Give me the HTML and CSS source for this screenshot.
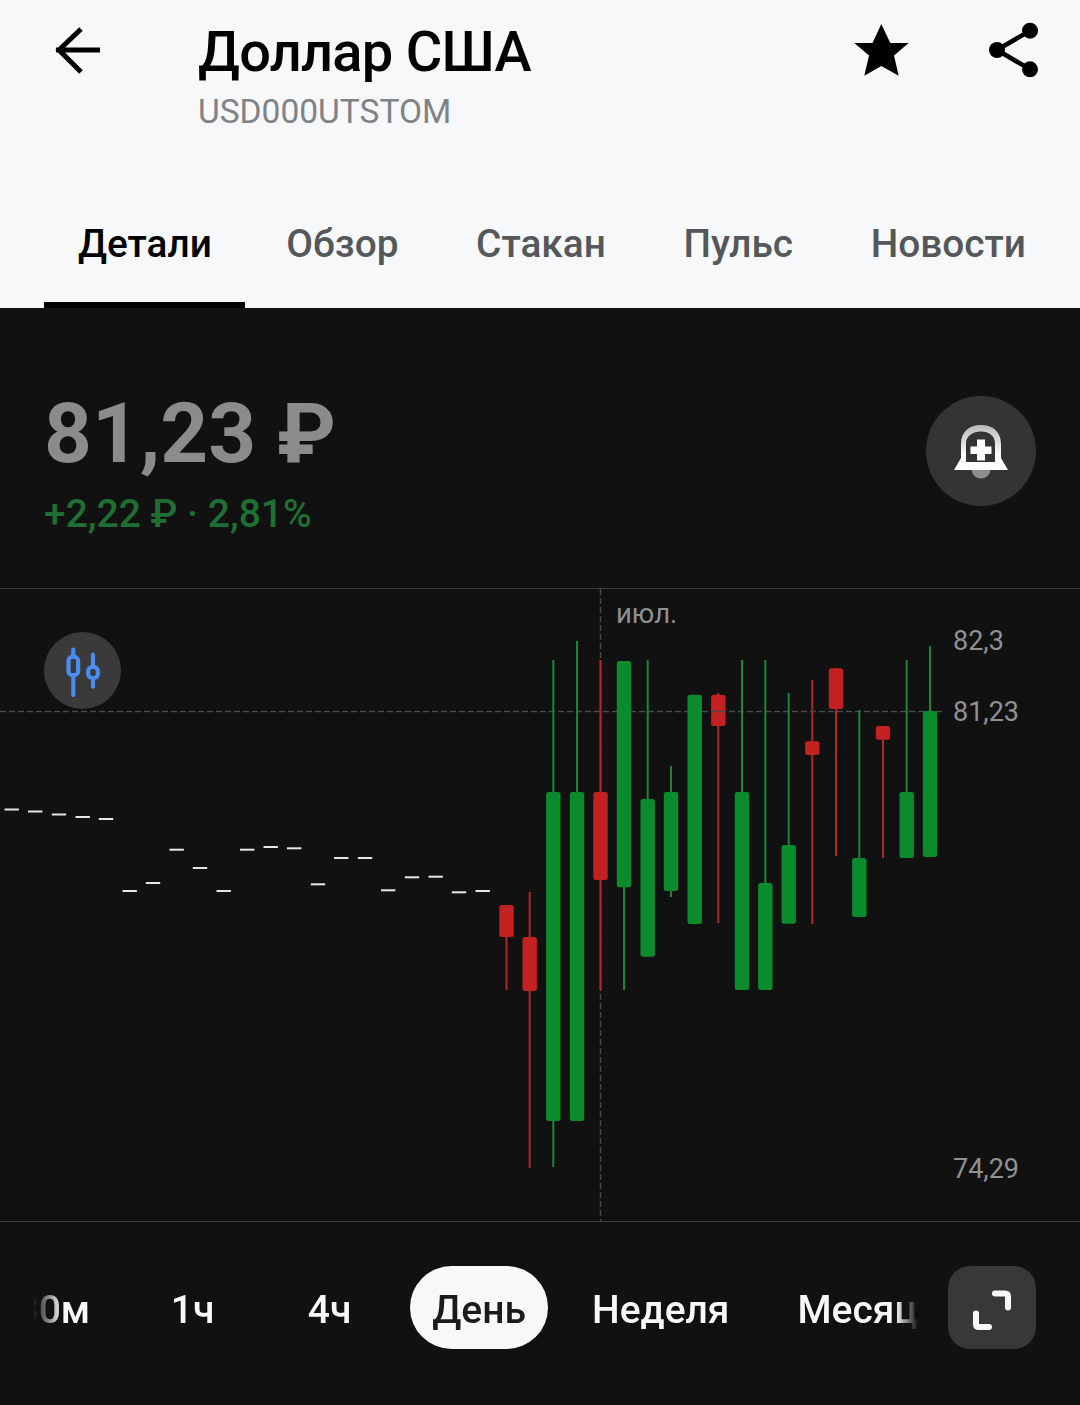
FILE: index.html
```html
<!DOCTYPE html>
<html lang="ru">
<head>
<meta charset="utf-8">
<title>Доллар США</title>
<link rel="stylesheet" href="styles.css">
</head>
<body>
<div class="page">
  <header class="header">
    <div class="topbar">
      <svg class="back" viewBox="0 0 56 56" aria-hidden="true"><path d="M2 28H46M27 7L5 28L27 50"/></svg>
      <div class="heading">
        <h1 class="title">Доллар США</h1>
        <div class="ticker">USD000UTSTOM</div>
      </div>
      <div class="actions">
        <svg class="star" viewBox="0 0 56 56" aria-hidden="true"><path d="M28.3 2L37.3 21H55.7L41 33.5L45.7 53.7L28.3 44L11.3 53.7L16 33.5L1.3 21H19.5Z"/></svg>
        <svg class="share" viewBox="0 0 56 56" aria-hidden="true"><path class="share-line" d="M41 8.700L8 28L41 47.300"/><circle cx="41" cy="8.700" r="8"/><circle cx="8" cy="28" r="8"/><circle cx="41" cy="47.300" r="8"/></svg>
      </div>
    </div>
    <nav class="tabs">
      <a class="tab tab-active">Детали</a>
      <a class="tab">Обзор</a>
      <a class="tab">Стакан</a>
      <a class="tab">Пульс</a>
      <a class="tab">Новости</a>
    </nav>
  </header>

  <section class="quote">
    <div class="quote-text">
      <div class="price">81,23 ₽</div>
      <div class="change">+2,22 ₽ · 2,81%</div>
    </div>
    <button class="alert-btn" aria-label="Добавить уведомление">
      <svg class="bell" viewBox="0 0 110 110" aria-hidden="true">
        <defs>
          <linearGradient id="bellFill" x1="0" y1="0" x2="0" y2="1">
            <stop offset="0" stop-color="#b9b9b9"/>
            <stop offset="0.7" stop-color="#ffffff"/>
          </linearGradient>
        </defs>
        <path class="clapper" d="M45.500 73a9.500 9.500 0 0 0 19 0z"/>
        <path fill="url(#bellFill)" fill-rule="evenodd" d="M28 74L35 62V48C35 36 43 29 55 29C67 29 75 36 75 48V62L82 74ZM40 66H69V47C69 40 63 35.500 55 35.500C47 35.500 40 40 40 47Z"/>
        <path class="plus" d="M51 43.500H59V50.500H65.500V58H59V64.500H51V58H44.500V50.500H51Z"/>
      </svg>
    </button>
  </section>

  <section class="chart">
    <svg class="plot" viewBox="0 589 1080 632" aria-hidden="true">
      <path class="grid" d="M600.500 589V1221"/>
      <g class="doji">
        <rect x="4.500" y="808.500" width="14.400" height="2"/><rect x="28" y="810.500" width="14.400" height="2"/><rect x="51.800" y="813.500" width="14.400" height="2"/><rect x="75.500" y="816" width="14.400" height="2"/><rect x="98.800" y="818" width="14.400" height="2"/>
        <rect x="122.500" y="890" width="14.400" height="2"/><rect x="145.800" y="882" width="14.400" height="2"/><rect x="169.500" y="848.700" width="14.400" height="2"/><rect x="192.800" y="867" width="14.400" height="2"/><rect x="216.500" y="890" width="14.400" height="2"/>
        <rect x="240" y="848.700" width="14.400" height="2"/><rect x="263.500" y="846" width="14.400" height="2"/><rect x="287" y="847.300" width="14.400" height="2"/><rect x="310.800" y="883.300" width="14.400" height="2"/><rect x="334" y="857" width="14.400" height="2"/>
        <rect x="357.800" y="857" width="14.400" height="2"/><rect x="381" y="889.300" width="14.400" height="2"/><rect x="404.800" y="876.300" width="14.400" height="2"/><rect x="428.500" y="875.700" width="14.400" height="2"/><rect x="451.800" y="891.300" width="14.400" height="2"/><rect x="475.500" y="890" width="14.400" height="2"/>
      </g>
      <g class="down">
        <path class="wick" d="M506.500 905V990M529.700 892V1168M600.500 660V990M718.300 693V923M812.300 680V924M836 668V856M883 726V858"/>
        <rect class="body" x="499.300" y="905" width="14.400" height="32" rx="2.500"/>
        <rect class="body" x="522.500" y="937" width="14.400" height="54" rx="2.500"/>
        <rect class="body" x="593.300" y="792" width="14.400" height="88" rx="2.500"/>
        <rect class="body" x="711.100" y="694.700" width="14.400" height="31.300" rx="2.500"/>
        <rect class="body" x="805.100" y="741.300" width="14.400" height="13.700" rx="2.500"/>
        <rect class="body" x="828.800" y="668.300" width="14.400" height="40.700" rx="2.500"/>
        <rect class="body" x="875.800" y="726" width="14.400" height="13.700" rx="2.500"/>
      </g>
      <path class="grid" d="M0 711.500H942"/>
      <g class="up">
        <path class="wick" d="M553.300 660V1167M577 641V792M624 661V990M647.700 660V800M671 766V897M742 660V792M765.300 660V884M788.700 693V846M859.300 710V858M906.700 660V792M930 646V712"/>
        <rect class="body" x="546.100" y="792" width="14.400" height="329" rx="2.500"/>
        <rect class="body" x="569.800" y="792" width="14.400" height="329" rx="2.500"/>
        <rect class="body" x="616.800" y="661" width="14.400" height="226.300" rx="2.500"/>
        <rect class="body" x="640.500" y="799" width="14.400" height="157.700" rx="2.500"/>
        <rect class="body" x="663.800" y="792" width="14.400" height="99" rx="2.500"/>
        <rect class="body" x="687.500" y="694.700" width="14.400" height="229.300" rx="2.500"/>
        <rect class="body" x="734.800" y="792" width="14.400" height="198" rx="2.500"/>
        <rect class="body" x="758.100" y="883" width="14.400" height="107" rx="2.500"/>
        <rect class="body" x="781.500" y="845" width="14.400" height="78.700" rx="2.500"/>
        <rect class="body" x="852.100" y="858" width="14.400" height="59" rx="2.500"/>
        <rect class="body" x="899.500" y="792" width="14.400" height="66" rx="2.500"/>
        <rect class="body" x="922.800" y="711" width="14.400" height="146" rx="2.500"/>
      </g>
    </svg>
    <span class="axis-label month">июл.</span>
    <span class="axis-label level-high">82,3</span>
    <span class="axis-label level-last">81,23</span>
    <span class="axis-label level-low">74,29</span>
    <button class="type-btn" aria-label="Тип графика">
      <svg class="type-icon" viewBox="0 0 77 77" aria-hidden="true">
        <path d="M29.300 17.500V24.700M29.300 43V63M49 22.700V35M49 46V54.700"/>
        <rect x="24.500" y="24.700" width="9.600" height="18.500" rx="4"/>
        <rect x="44.200" y="35" width="9.600" height="11" rx="4"/>
      </svg>
    </button>
  </section>

  <footer class="periods">
    <div class="period-list">
      <span class="period period-first">30м</span>
      <span class="period">1ч</span>
      <span class="period">4ч</span>
      <span class="period period-active">День</span>
      <span class="period">Неделя</span>
      <span class="period">Месяц</span>
    </div>
    <button class="expand-btn" aria-label="Развернуть">
      <svg class="expand" viewBox="0 0 88 83" aria-hidden="true"><path d="M47 27.600H57Q60 27.600 60 30.600V41.600M28 47.600V58Q28 61 31 61H41"/></svg>
    </button>
  </footer>
</div>
</body>
</html>
```
FILE: styles.css
```css
* { box-sizing: border-box; }
html, body { margin: 0; padding: 0; }
body {
  width: 1080px;
  height: 1405px;
  overflow: hidden;
  background: #111112;
  font-family: Roboto, "Noto Sans", sans-serif;
}
button { border: 0; padding: 0; margin: 0; }
svg { display: block; }

.page { width: 1080px; height: 1405px; display: flex; flex-direction: column; }

/* header */
.header { height: 308px; background: #f7f8fa; display: flex; flex-direction: column; flex: none; }
.topbar { display: flex; align-items: flex-start; padding: 22px 35px 0 54px; height: 206px; }
.back { width: 56px; height: 56px; flex: none; }
.back path { fill: none; stroke: #000; stroke-width: 5; }
.heading { margin-left: 88px; }
.title { margin: 0; font-size: 56px; line-height: 60px; font-weight: 500; color: #000; letter-spacing: -0.75px; }
.ticker { margin-top: 8px; font-size: 33.5px; line-height: 44px; color: #808285; }
.actions { margin-left: auto; display: flex; gap: 80px; }
.star, .share { width: 56px; height: 56px; flex: none; }
.share-line { fill: none; stroke: #000; stroke-width: 4.6; }

.tabs { display: flex; gap: 10px; padding-left: 44px; height: 102px; }
.tab { padding: 0 33.8px; height: 102px; line-height: 76px; font-size: 38.8px; font-weight: 500; color: #55585b; white-space: nowrap; }
.tab-active { color: #000; border-bottom: 6px solid #000; padding: 0 33px 0 34px; margin-right: -2.4px; }

/* quote */
.quote { height: 281px; border-bottom: 1px solid #3a3b3c; display: flex; justify-content: space-between; padding: 88px 44px 0; flex: none; }
.price { font-size: 83.5px; line-height: 76px; font-weight: 700; color: #8b8b8b; }
.change { margin-top: 20px; font-size: 39px; line-height: 44px; font-weight: 500; color: #1f6f33; }
.alert-btn { width: 110px; height: 110px; border-radius: 50%; background: #343434; flex: none; }
.bell { width: 110px; height: 110px; }
.clapper { fill: #8e8e8e; }
.plus { fill: #fff; }

/* chart */
.chart { position: relative; height: 633px; border-bottom: 1px solid #3a3b3c; flex: none; }
.plot { width: 1080px; height: 632px; }
.grid { fill: none; stroke: #48494a; stroke-width: 1.5; stroke-dasharray: 6 3; }
.doji rect { fill: #e6e6e6; }
.wick { fill: none; stroke-width: 2; }
.up .wick { stroke: #1f8436; }
.down .wick { stroke: #ad2a2a; }
.up .body { fill: #0a8b2c; }
.down .body { fill: #c22021; }
.axis-label { position: absolute; font-size: 27px; line-height: 32px; color: #8f9194; white-space: nowrap; }
.month { left: 616px; top: 9px; font-size: 27.5px; }
.level-high { left: 953px; top: 36px; }
.level-last { left: 953px; top: 107px; }
.level-low { left: 953px; top: 564px; }
.type-btn { position: absolute; left: 44px; top: 43px; width: 77px; height: 77px; border-radius: 50%; background: #3a3a3b; }
.type-icon { width: 77px; height: 77px; }
.type-icon path, .type-icon rect { fill: none; stroke: #4a8cf0; stroke-width: 4.2; stroke-linecap: round; }

/* periods */
.periods { flex: 1; display: flex; align-items: flex-start; padding-top: 44px; }
.period-list {
  width: 918px;
  flex: none;
  display: flex;
  gap: 23px;
  overflow: hidden;
  -webkit-mask-image: linear-gradient(to right, transparent 33px, #000 62px, #000 896px, transparent 918px);
  mask-image: linear-gradient(to right, transparent 33px, #000 62px, #000 896px, transparent 918px);
}
.period { flex: none; min-width: 114px; height: 83px; padding: 0 22.5px; border-radius: 42px; line-height: 88px; text-align: center; font-size: 39px; font-weight: 500; color: #f7f8fa; white-space: nowrap; }
.period-first { margin-left: -6px; }
.period-active { background: #f7f8fa; color: #1a1b1c; margin-right: -2px; }
.expand-btn { margin-left: 30px; width: 88px; height: 83px; border-radius: 22px; background: #38383a; flex: none; }
.expand { width: 88px; height: 83px; }
.expand path { fill: none; stroke: #f7f8fa; stroke-width: 6; stroke-linecap: round; }
```
